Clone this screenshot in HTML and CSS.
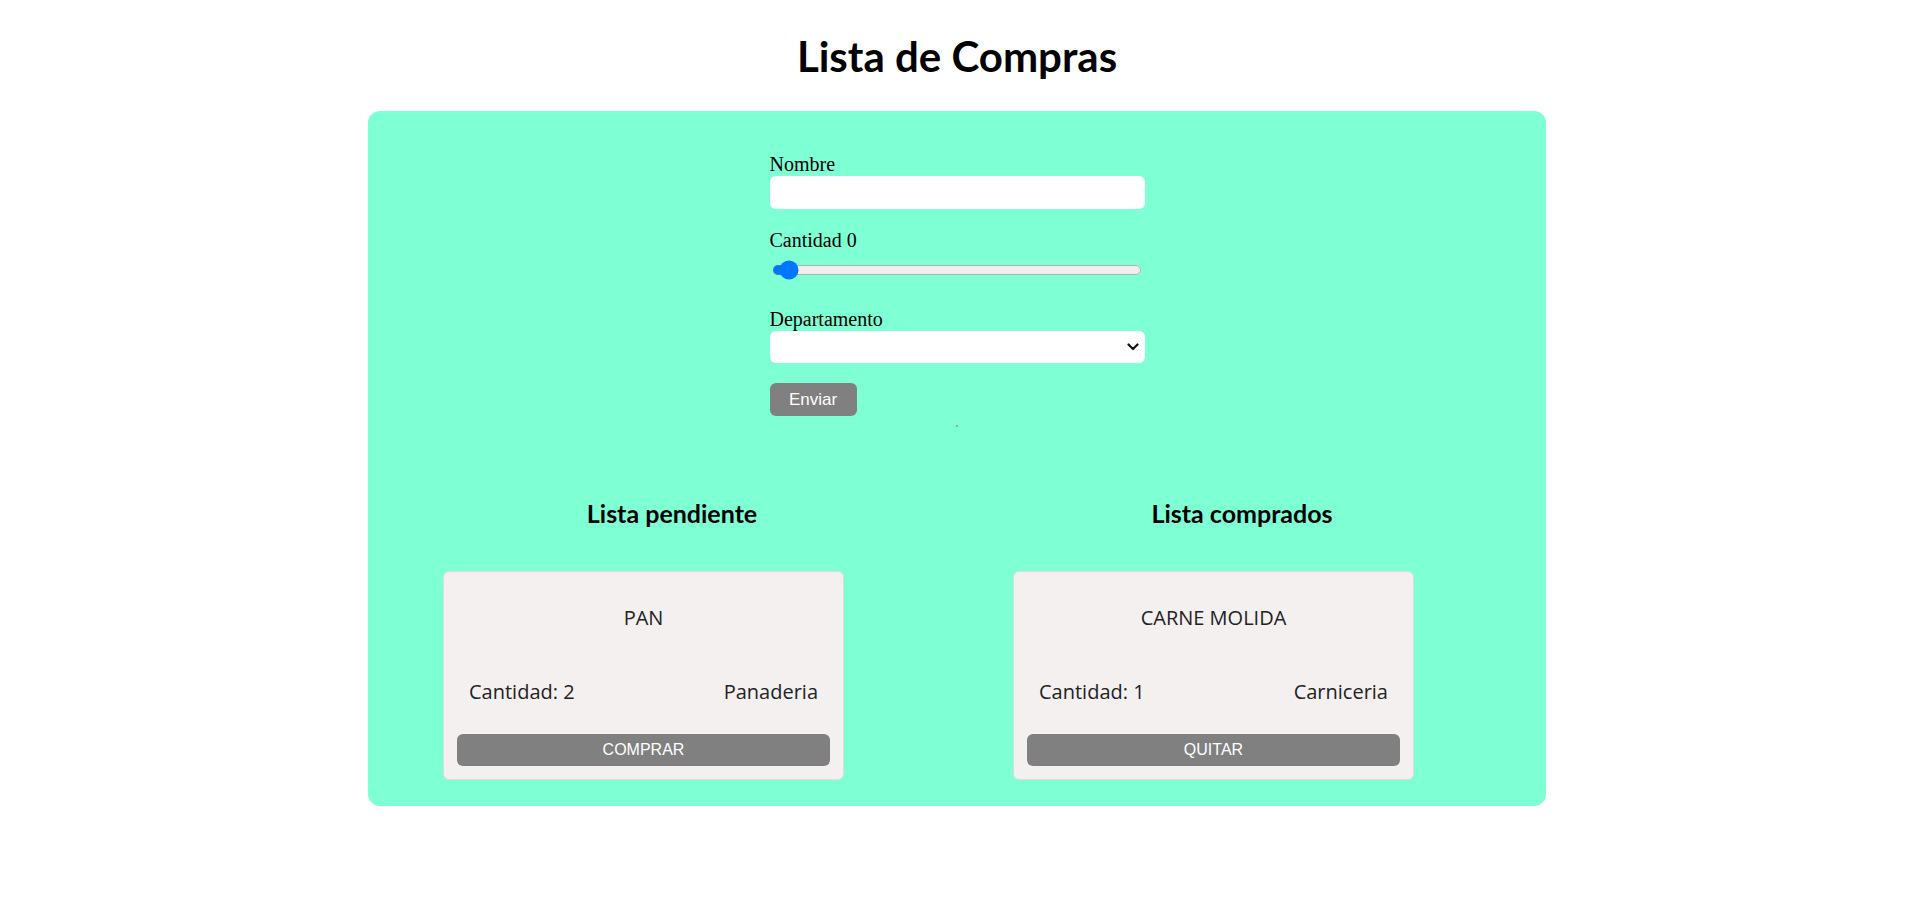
FILE: index.html
```html
<!DOCTYPE html>
<html lang="es">
<head>
<meta charset="utf-8">
<title>Lista de Compras</title>
<link rel="stylesheet" href="styles.css">
</head>
<body>
<h1 class="title">Lista de Compras</h1>
<main class="panel">
  <form class="form">
    <div class="field">
      <label class="label" for="nombre">Nombre</label>
      <input class="text-input" id="nombre" type="text">
    </div>
    <div class="field">
      <label class="label" for="cantidad">Cantidad 0</label>
      <input class="range" id="cantidad" type="range" min="0" max="100" value="2">
    </div>
    <div class="field">
      <label class="label" for="depto">Departamento</label>
      <div class="select-wrap">
        <select class="select" id="depto"><option></option></select>
        <svg class="chevron" width="12" height="8" viewBox="0 0 12 8"><path d="M1.5 1.5 L6 6 L10.5 1.5" fill="none" stroke="#111" stroke-width="2.2" stroke-linecap="round" stroke-linejoin="round"/></svg>
      </div>
    </div>
    <button class="send" type="button">Enviar</button>
    <div class="dot"></div>
  </form>
  <section class="lists">
    <div class="column">
      <h2 class="list-title">Lista pendiente</h2>
      <div class="card">
        <p class="card-name">PAN</p>
        <div class="card-info"><span>Cantidad: 2</span><span>Panaderia</span></div>
        <button class="card-btn" type="button">COMPRAR</button>
      </div>
    </div>
    <div class="column">
      <h2 class="list-title">Lista comprados</h2>
      <div class="card">
        <p class="card-name">CARNE MOLIDA</p>
        <div class="card-info"><span>Cantidad: 1</span><span>Carniceria</span></div>
        <button class="card-btn" type="button">QUITAR</button>
      </div>
    </div>
  </section>
</main>
</body>
</html>
```
FILE: styles.css
```css
body {
  margin: 0;
  background: #ffffff;
  font-family: "Liberation Serif", "Times New Roman", serif;
}

.title {
  margin: 31px 0 30px;
  text-align: center;
  font-family: Lato, "Noto Sans", sans-serif;
  font-weight: 700;
  font-size: 42px;
  line-height: 50px;
  color: #000;
}

.panel {
  width: 1178px;
  margin: 0 auto;
  box-sizing: border-box;
  background: #7fffd4;
  border-radius: 12px;
  padding: 42px 0 26px;
}

.form {
  width: 375px;
  margin: 0 auto;
  display: flex;
  flex-direction: column;
}

.field {
  display: flex;
  flex-direction: column;
  margin-bottom: 20px;
}

.label {
  font-size: 20px;
  line-height: 23px;
  color: #000;
}

.text-input {
  height: 33px;
  border: none;
  border-radius: 6px;
  background: #fff;
  padding: 0 8px;
  box-sizing: border-box;
  margin: 0;
}

.range {
  zoom: 1.25;
  width: 296px;
  margin: 6.4px 2px;
  height: 16px;
  accent-color: #0075ff;
}

.select-wrap {
  position: relative;
  display: flex;
  flex-direction: column;
}

.select {
  height: 32px;
  border: none;
  border-radius: 6px;
  background: #fff;
  margin: 0;
  padding: 0 4px;
  font-size: 16px;
  color: #000;
  appearance: none;
  -webkit-appearance: none;
}

.chevron {
  position: absolute;
  right: 6px;
  top: 12px;
  pointer-events: none;
}

.send {
  align-self: flex-start;
  width: 87px;
  height: 33px;
  border: none;
  border-radius: 6px;
  background: #808080;
  color: #fff;
  font-family: "Liberation Sans", Arial, sans-serif;
  font-size: 17px;
  padding: 0;
  margin: 0;
}

.dot {
  align-self: center;
  width: 2px;
  height: 2px;
  margin: 9px 0 0;
  background: #9aaaa4;
}

.lists {
  width: 1140px;
  margin: 71px auto 0;
  display: grid;
  grid-template-columns: 1fr 1fr;
}

.column {
  display: flex;
  flex-direction: column;
}

.list-title {
  margin: 0 0 43px;
  text-align: center;
  font-family: Lato, "Noto Sans", sans-serif;
  font-weight: 700;
  font-size: 25px;
  line-height: 30px;
  color: #000;
}

.card {
  width: 401px;
  box-sizing: border-box;
  margin-left: 56px;
  background: #f3f0ef;
  border: 1px solid #dcdcdc;
  border-radius: 6px;
  padding: 32px 13px 13px;
  display: flex;
  flex-direction: column;
  font-family: "Open Sans", "Noto Sans", sans-serif;
  color: #222;
}

.card-name {
  margin: 0;
  text-align: center;
  font-size: 20px;
  line-height: 27px;
}

.card-info {
  display: flex;
  justify-content: space-between;
  padding: 0 12px;
  margin-top: 47px;
  font-size: 20px;
  line-height: 27px;
}

.card-btn {
  margin-top: 29px;
  height: 32px;
  border: none;
  border-radius: 6px;
  background: #808080;
  color: #fff;
  font-family: "Liberation Sans", Arial, sans-serif;
  font-size: 16px;
  padding: 0;
}
```
